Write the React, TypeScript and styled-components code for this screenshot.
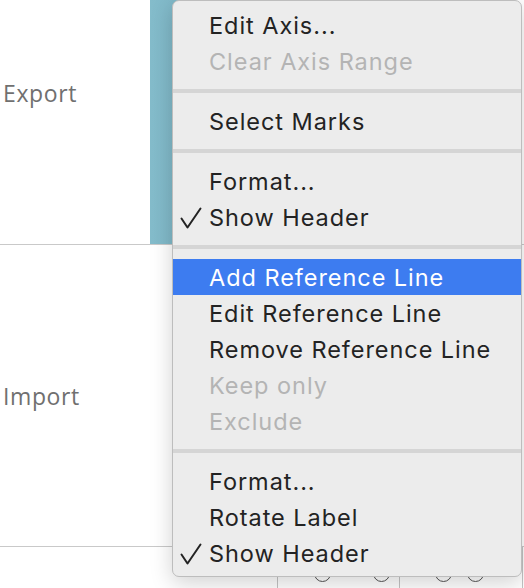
import React from "react";
import styled, { createGlobalStyle } from "styled-components";

const Global = createGlobalStyle`
  html, body { margin: 0; padding: 0; background: #ffffff; }
  body { width: 524px; height: 588px; overflow: hidden; }
`;

const Stage = styled.div`
  position: relative;
  width: 524px;
  height: 588px;
  overflow: hidden;
  background: #ffffff;
`;

const Sheet = styled.div`
  display: flex;
  flex-direction: column;
  margin-top: -58px;
`;

const Row = styled.div<{ $h: number }>`
  display: flex;
  height: ${(p) => p.$h}px;
  border-bottom: 1px solid #c9c9c9;
  flex-shrink: 0;
`;

const LabelCell = styled.div`
  width: 150px;
  flex-shrink: 0;
  display: flex;
  align-items: center;
  padding-left: 3px;
  box-sizing: border-box;
  font-family: "Open Sans", "Liberation Sans", sans-serif;
  font-size: 23px;
  letter-spacing: 0.6px;
  color: #707070;
`;

const ChartCell = styled.div`
  flex: 1;
  display: flex;
`;

const Bar = styled.div<{ $w: number }>`
  width: ${(p) => p.$w}px;
  height: 100%;
  background: linear-gradient(90deg, #84bccb, #7cb5c6);
`;

const AxisRow = styled.div`
  display: flex;
  height: 60px;
  padding-left: 277px;
`;

const AxisCell = styled.div<{ $w: number; $pad: number; $gap: number }>`
  width: ${(p) => p.$w}px;
  flex-shrink: 0;
  border-left: 1px solid #c4c4c4;
  display: flex;
  align-items: flex-start;
  padding-top: 18px;
  padding-left: ${(p) => p.$pad}px;
  gap: ${(p) => p.$gap}px;
  box-sizing: border-box;
`;

const Dot = styled.div`
  width: 17px;
  height: 17px;
  border-radius: 50%;
  border: 1.6px solid #555555;
  box-sizing: border-box;
`;

const Menu = styled.div`
  position: absolute;
  left: 172px;
  top: 0px;
  width: 350px;
  height: 577px;
  box-sizing: border-box;
  padding: 6px 0;
  background: #ececec;
  border: 1px solid #bdbdbd;
  border-radius: 7px;
  box-shadow: 0 6px 22px rgba(0, 0, 0, 0.18);
  display: flex;
  flex-direction: column;
  font-family: Inter, "Liberation Sans", sans-serif;
  font-size: 23.5px;
`;

const Item = styled.div<{ $disabled?: boolean; $active?: boolean }>`
  position: relative;
  height: 36px;
  flex-shrink: 0;
  display: flex;
  align-items: center;
  padding-left: 36px;
  letter-spacing: 0.95px;
  color: ${(p) => (p.$active ? "#ffffff" : p.$disabled ? "#b4b4b4" : "#232323")};
  background: ${(p) => (p.$active ? "#3d7cf0" : "transparent")};
`;

const Check = styled.svg`
  position: absolute;
  left: 7px;
  top: 8px;
  width: 22px;
  height: 22px;
`;

const Separator = styled.div`
  height: 4px;
  margin: 10px 0;
  background: #d5d5d5;
  flex-shrink: 0;
`;

type Entry =
  | { kind: "sep" }
  | { kind: "item"; label: string; disabled?: boolean; active?: boolean; checked?: boolean };

const entries: Entry[] = [
  { kind: "item", label: "Edit Axis..." },
  { kind: "item", label: "Clear Axis Range", disabled: true },
  { kind: "sep" },
  { kind: "item", label: "Select Marks" },
  { kind: "sep" },
  { kind: "item", label: "Format..." },
  { kind: "item", label: "Show Header", checked: true },
  { kind: "sep" },
  { kind: "item", label: "Add Reference Line", active: true },
  { kind: "item", label: "Edit Reference Line" },
  { kind: "item", label: "Remove Reference Line" },
  { kind: "item", label: "Keep only", disabled: true },
  { kind: "item", label: "Exclude", disabled: true },
  { kind: "sep" },
  { kind: "item", label: "Format..." },
  { kind: "item", label: "Rotate Label" },
  { kind: "item", label: "Show Header", checked: true },
];

export default function App() {
  return (
    <Stage>
      <Global />
      <Sheet>
        <Row $h={302}>
          <LabelCell>Export</LabelCell>
          <ChartCell>
            <Bar $w={60} />
          </ChartCell>
        </Row>
        <Row $h={301}>
          <LabelCell>Import</LabelCell>
          <ChartCell />
        </Row>
        <AxisRow>
          <AxisCell $w={122} $pad={36} $gap={42}>
            <Dot />
            <Dot />
          </AxisCell>
          <AxisCell $w={123} $pad={35} $gap={15}>
            <Dot />
            <Dot />
          </AxisCell>
          <AxisCell $w={10} $pad={0} $gap={0} />
        </AxisRow>
      </Sheet>
      <Menu>
        {entries.map((e, i) =>
          e.kind === "sep" ? (
            <Separator key={i} />
          ) : (
            <Item key={i} $disabled={e.disabled} $active={e.active}>
              {e.checked && (
                <Check viewBox="0 0 22 22">
                  <path d="M1.5 11.5 L7.5 20.5 L20.5 1.5" fill="none" stroke="#232323" strokeWidth="2" strokeLinecap="round" strokeLinejoin="round" />
                </Check>
              )}
              {e.label}
            </Item>
          )
        )}
      </Menu>
    </Stage>
  );
}
